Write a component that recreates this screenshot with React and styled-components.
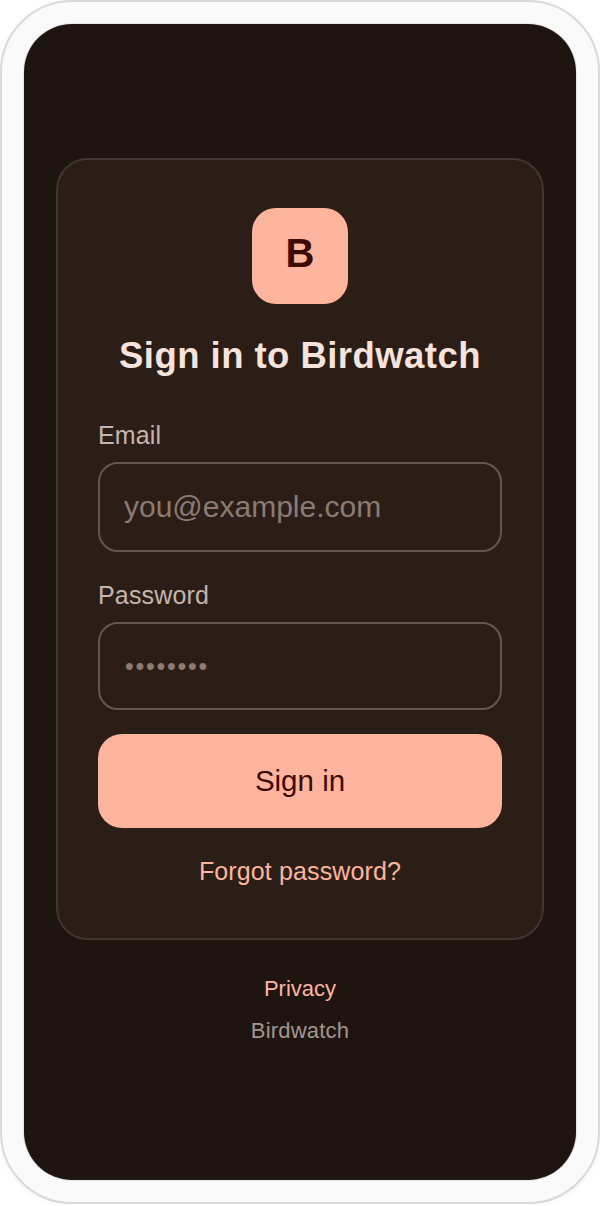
import React from 'react';
import styled, { createGlobalStyle } from 'styled-components';

const GlobalStyle = createGlobalStyle`
  html, body { margin: 0; padding: 0; background: #ffffff; }
  * { box-sizing: border-box; }
  body { font-family: "Liberation Sans", Arial, sans-serif; }
`;

export default function App() {
  return (
    <>
      <GlobalStyle />
      <Device>
        <Screen>
          <Card>
            <Logo>B</Logo>
            <Title>Sign in to Birdwatch</Title>
            <Form onSubmit={e => e.preventDefault()}>
              <Field>
                <Label htmlFor="email">Email</Label>
                <Input id="email" type="email" placeholder="you@example.com" />
              </Field>
              <Field>
                <Label htmlFor="password">Password</Label>
                <Input id="password" type="password" placeholder="••••••••" $dots />
              </Field>
              <SubmitButton type="submit">Sign in</SubmitButton>
            </Form>
            <ForgotLink href="#">Forgot password?</ForgotLink>
          </Card>
          <Footer>
            <FooterLink href="#">Privacy</FooterLink>
            <FooterText>Birdwatch</FooterText>
          </Footer>
        </Screen>
      </Device>
    </>
  );
}

const Device = styled.div`
  width: 600px;
  height: 1204px;
  padding: 22px;
  background: #fafafa;
  border: 2px solid #d9d9d9;
  border-radius: 72px;
  box-shadow: 0 2px 6px rgba(0, 0, 0, 0.05);
`;

const Screen = styled.main`
  height: 1156px;
  padding: 134px 32px 0;
  background: #1e1410;
  border-radius: 48px;
  box-shadow: 0 0 0 1px #e6e6e6;
  display: flex;
  flex-direction: column;
`;

const Card = styled.section`
  height: 782px;
  padding: 48px 40px 0;
  background: #2b1e17;
  border: 2px solid #44362f;
  border-radius: 32px;
  display: flex;
  flex-direction: column;
  align-items: center;
`;

const Logo = styled.div`
  width: 96px;
  height: 96px;
  padding-bottom: 5px;
  border-radius: 24px;
  background: #ffb49e;
  color: #3b0a00;
  font-size: 40px;
  font-weight: 700;
  display: flex;
  align-items: center;
  justify-content: center;
`;

const Title = styled.h1`
  margin: 30px 0 0;
  font-size: 36.5px;
  line-height: 44px;
  font-weight: 700;
  letter-spacing: 0.45px;
  color: #f6e3db;
  text-align: center;
`;

const Form = styled.form`
  width: 100%;
  margin-top: 41px;
  display: flex;
  flex-direction: column;
`;

const Field = styled.div`
  display: flex;
  flex-direction: column;
  & + & {
    margin-top: 27px;
  }
`;

const Label = styled.label`
  font-size: 25px;
  line-height: 32px;
  letter-spacing: 0.15px;
  color: #c4b5ad;
  margin-bottom: 11px;
`;

const Input = styled.input`
  width: 100%;
  height: ${props => (props.$dots ? '88px' : '90px')};
  padding: 0 ${props => (props.$dots ? '25px' : '24px')};
  background: transparent;
  border: 2px solid #66564e;
  border-radius: 20px;
  font-family: inherit;
  font-size: ${props => (props.$dots ? '25px' : '30px')};
  letter-spacing: ${props => (props.$dots ? '1.75px' : 'normal')};
  color: #f6e3db;
  outline: none;
  &::placeholder {
    color: #8c7b73;
    opacity: 1;
  }
`;

const SubmitButton = styled.button`
  height: 94px;
  margin-top: 24px;
  border: none;
  border-radius: 24px;
  background: #ffb49e;
  color: #3b0a00;
  font-family: inherit;
  font-size: 29.5px;
  cursor: pointer;
`;

const ForgotLink = styled.a`
  margin-top: 27px;
  font-size: 25px;
  line-height: 32px;
  letter-spacing: 0.13px;
  color: #ffb49e;
  text-decoration: none;
`;

const Footer = styled.footer`
  margin-top: 35px;
  display: flex;
  flex-direction: column;
  align-items: center;
  gap: 14px;
`;

const FooterLink = styled.a`
  font-size: 22px;
  line-height: 28px;
  color: #ffb49e;
  text-decoration: none;
`;

const FooterText = styled.span`
  font-size: 22px;
  line-height: 28px;
  letter-spacing: 0.2px;
  color: #a3948d;
`;
